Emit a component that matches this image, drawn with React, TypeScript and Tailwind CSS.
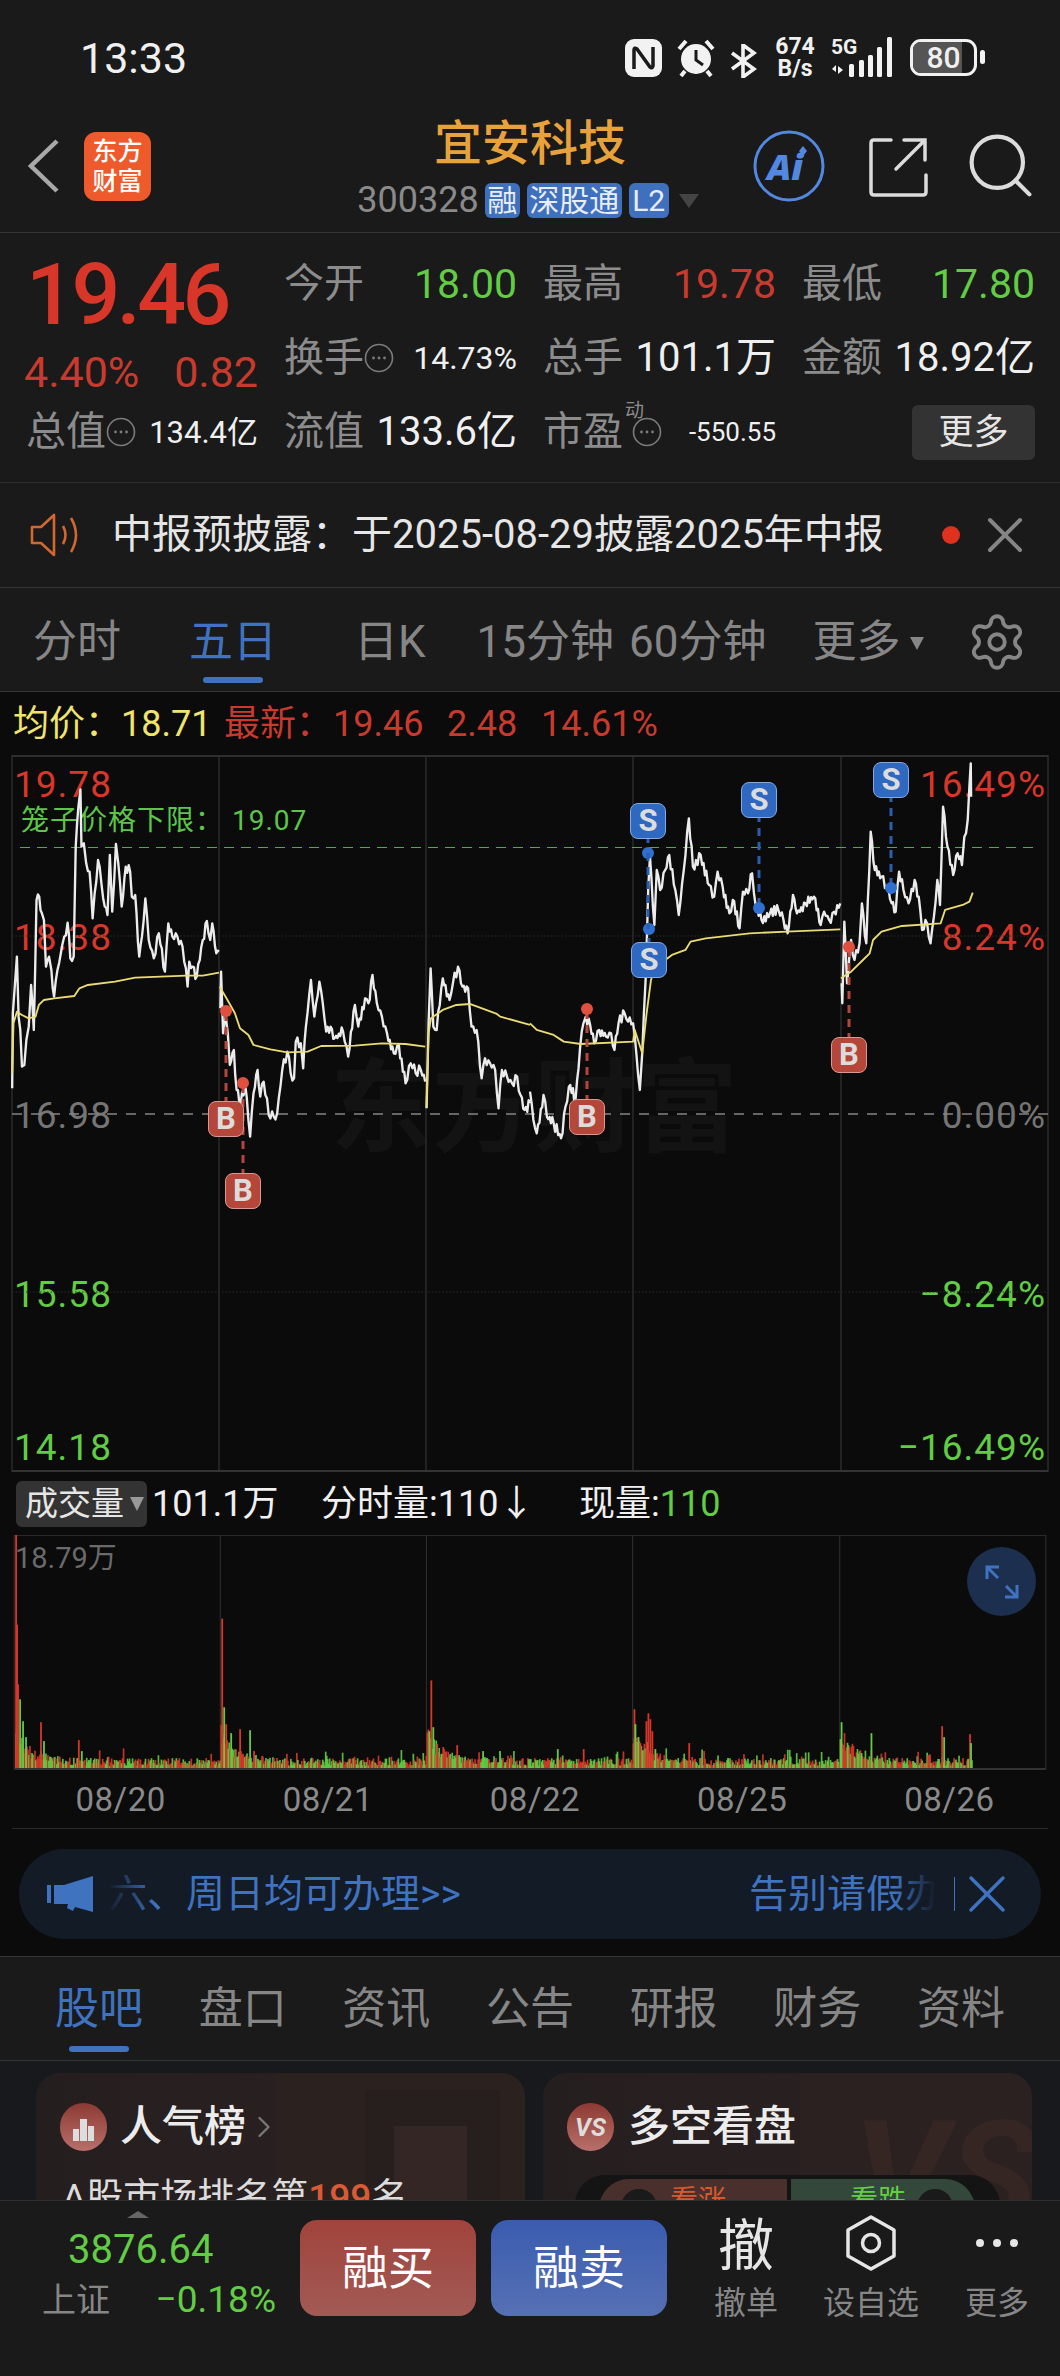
import React from "react";
import { ChevronRight, X, Search, Settings } from "lucide-react";

// ---- chart data, traced in zoom coordinates (x*2.958, (y-740)*3) ----
const priceDaysA: number[][] = [
  [36,1045,38,820,44,735,50,650,55,830,60,870,65,980,72,975,78,900,85,860,92,735,100,870,108,480,116,470,124,520,130,540,136,680,145,650,152,690,160,770,170,690,180,640,190,590,200,548,208,655,218,650,224,320,232,200,238,148,241,320,248,310,255,370,265,395,274,535,280,460,290,360,300,430,310,500,318,525,325,345,332,515,343,312,350,370,360,500,372,380,385,395,390,470,400,465,412,650,420,590,430,475,440,600,455,655,470,580,488,695,498,550,510,590,525,590,540,620,555,740,560,665,570,680,582,710,600,600,612,543,622,600,628,550,640,640,648,635],
  [652,805,654,695,660,880,668,830,674,880,680,975,692,930,700,1050,712,1090,725,1030,740,1190,750,1060,762,990,770,1070,780,1025,795,1125,810,1130,820,1120,835,990,850,935,860,1000,870,1015,875,905,890,910,897,985,905,860,920,720,930,830,945,725,955,790,965,875,978,860,990,895,1015,875,1030,950,1050,795,1060,860,1080,775,1090,790,1102,705,1115,790,1130,830,1145,880,1165,940,1180,915,1200,1030,1215,970,1230,1000,1245,990,1258,1025],
  [1262,1105,1268,850,1274,685,1282,860,1292,870,1310,715,1330,780,1340,730,1355,680,1368,740,1385,745,1395,860,1410,870,1425,1015,1435,955,1450,970,1465,990,1475,1105,1485,990,1500,1010,1515,1030,1530,1010,1540,1065,1552,1110,1568,1090],
];
const priceDaysB: number[][] = [
  [0,1055,10,1140,20,1180,40,1065,50,1130,70,1150,92,1195,105,1100,115,1040,135,1075,148,925,158,850,165,830,178,855,190,910,205,870,225,890,240,880,250,930,262,850,280,820,290,845,305,850,315,945,325,1050,332,940,342,720,350,440,355,350,368,555,375,390,385,450,400,390,412,345,430,450,440,525,455,390,470,235,482,380,505,345,530,435,545,470,555,395,570,440,590,520,600,480,620,565,630,455,645,460,657,400,668,500,685,540,710,520,735,510,750,540,762,580,778,465,790,520,815,490,840,470,860,555,870,515,885,540,900,515,918,490],
  [922,730,924,790,930,545,938,730,950,600,960,660,975,610,982,490,995,610,1008,275,1020,390,1040,410,1055,440,1070,490,1082,515,1092,395,1105,450,1120,490,1138,420,1150,470,1160,570,1170,540,1185,610,1195,530,1205,420,1213,495,1222,200,1235,320,1252,405,1265,340,1278,375,1285,290,1295,240,1300,140,1304,70,1305,170],
];
const avgDaysA: number[][] = [
  [36,1000,40,850,50,815,65,825,85,835,105,830,115,795,130,780,160,775,220,768,235,745,260,735,340,725,400,713,550,707,600,707,648,698],
  [650,740,670,775,695,820,710,865,735,885,750,915,800,928,850,937,910,935,950,918,1050,917,1130,910,1200,912,1258,920],
  [1262,1100,1268,880,1275,835,1310,810,1350,795,1390,792,1470,822,1480,830,1568,855],
];
const avgDaysB: number[][] = [
  [0,850,20,870,70,885,100,905,150,912,305,905,310,870,332,940,345,820,358,720,370,680,400,660,420,645,460,630,475,605,520,595,650,580,760,575,918,568],
  [920,715,950,695,985,660,1005,640,1015,600,1040,575,1100,558,1215,550,1228,510,1280,495,1300,485,1310,458],
];

const rng = (seed: number) => {
  let s = seed;
  return () => {
    s = (s * 1664525 + 1013904223) % 4294967296;
    return s / 4294967296;
  };
};

// zig-zags between traced points so the line looks like tick data
const noisy = (pts: number[], seed: number) => {
  const r = rng(seed);
  const out: string[] = [];
  let sign = 1;
  for (let i = 0; i < pts.length - 2; i += 2) {
    out.push(`${pts[i]},${pts[i + 1]}`);
    const dx = pts[i + 2] - pts[i];
    const n = Math.floor(dx / 4);
    for (let k = 1; k < n; k++) {
      const t = k / n;
      sign = -sign;
      const y = pts[i + 1] + (pts[i + 3] - pts[i + 1]) * t + sign * (3 + r() * 14);
      out.push(`${pts[i] + dx * t},${y}`);
    }
  }
  out.push(`${pts[pts.length - 2]},${pts[pts.length - 1]}`);
  return out.join(" ");
};
const plain = (pts: number[]) => {
  const out: string[] = [];
  for (let i = 0; i < pts.length; i += 2) out.push(`${pts[i]},${pts[i + 1]}`);
  return out.join(" ");
};

const RED = "#d9362a";
const GREEN = "#62cc45";

const markers = [
  { t: "B", x: 226, y: 1119, dy: 1011 },
  { t: "B", x: 243, y: 1191, dy: 1083 },
  { t: "B", x: 587, y: 1117, dy: 1009 },
  { t: "B", x: 849, y: 1055, dy: 947 },
  { t: "S", x: 648, y: 821, dy: 853 },
  { t: "S", x: 649, y: 960, dy: 929 },
  { t: "S", x: 759, y: 800, dy: 908 },
  { t: "S", x: 891, y: 780, dy: 888 },
];

const PriceChart = () => (
  <svg viewBox="0 755 1060 717" className="absolute inset-0 w-full h-full">
    {[12, 219, 426, 633, 841, 1048].map((x) => (
      <line key={x} x1={x} x2={x} y1={755} y2={1472} stroke="#2b2b2b" strokeWidth="1.5" />
    ))}
    <line x1="12" x2="1048" y1="756" y2="756" stroke="#2e2e2e" strokeWidth="2" />
    <line x1="12" x2="1048" y1="1471" y2="1471" stroke="#333" strokeWidth="2" />
    <line x1="12" x2="1048" y1="936" y2="936" stroke="#2a2a2a" strokeDasharray="1.5 2" />
    <line x1="12" x2="1048" y1="1292" y2="1292" stroke="#2a2a2a" strokeDasharray="1.5 2" />
    <line x1="20" x2="1040" y1="847.5" y2="847.5" stroke="#4fae3c" strokeWidth="1.2" strokeDasharray="10 7" />
    <line x1="12" x2="1048" y1="1114" y2="1114" stroke="#858585" strokeWidth="1.6" strokeDasharray="10 9" />
    <g transform="translate(0 740) scale(0.338 0.3333)" fill="none" strokeLinejoin="round">
      {priceDaysA.map((d, i) => (
        <polyline key={i} points={noisy(d, 7 + i)} stroke="#ececec" strokeWidth="7" />
      ))}
      {avgDaysA.map((d, i) => (
        <polyline key={i} points={plain(d)} stroke="#e9dc72" strokeWidth="5.5" />
      ))}
    </g>
    <g transform="translate(530 740) scale(0.338 0.3333)" fill="none" strokeLinejoin="round">
      {priceDaysB.map((d, i) => (
        <polyline key={i} points={noisy(d, 31 + i)} stroke="#ececec" strokeWidth="7" />
      ))}
      {avgDaysB.map((d, i) => (
        <polyline key={i} points={plain(d)} stroke="#e9dc72" strokeWidth="5.5" />
      ))}
    </g>
    {markers.map((m) => (
      <g key={`${m.x}-${m.y}`}>
        <line
          x1={m.x}
          x2={m.x}
          y1={m.y}
          y2={m.dy}
          stroke={m.t === "B" ? "#b5463a" : "#2a5fae"}
          strokeWidth="3"
          strokeDasharray="8 6"
        />
        <circle cx={m.x} cy={m.dy} r="6" fill={m.t === "B" ? "#e0503f" : "#2f6fd0"} />
      </g>
    ))}
    <line x1="648" x2="648" y1="853" y2="929" stroke="#2a5fae" strokeWidth="3" strokeDasharray="8 6" />
  </svg>
);

// volume bars, deterministic noise plus the spikes read off the reference
const spikes: [number, number, string][] = [
  [13, 235, RED], [14, 145, RED], [15, 85, RED], [17, 70, GREEN], [20, 48, GREEN], [23, 32, GREEN], [38, 47, RED], [41, 28, GREEN], [76, 29, RED], [79, 18, GREEN],
  [220, 151, RED], [222, 62, GREEN], [224, 45, RED], [229, 36, GREEN], [238, 40, RED], [248, 39, GREEN], [252, 18, RED],
  [430, 89, RED], [428, 38, GREEN], [432, 42, GREEN], [436, 25, RED], [442, 22, RED], [456, 24, RED], [482, 18, GREEN], [499, 18, GREEN], [557, 20, GREEN], [583, 20, RED],
  [634, 60, RED], [635, 45, GREEN], [638, 32, GREEN], [640, 26, RED], [646, 48, RED], [648, 56, RED], [650, 50, RED], [652, 38, RED], [655, 20, GREEN], [689, 26, RED], [728, 11, GREEN],
  [841, 30, GREEN], [842, 47, GREEN], [844, 24, RED], [846, 14, RED], [862, 16, GREEN], [872, 36, GREEN], [943, 43, RED], [945, 32, GREEN], [971, 35, RED], [972, 26, GREEN], [930, 10, RED],
];
const volumeBars = () => {
  const r = rng(2025);
  const bars: { x: number; h: number; c: string }[] = [];
  const days = [12, 219, 426, 633, 841];
  for (let x = 13; x < 974; x++) {
    const start = days.reduce((a, d) => (x >= d ? d : a), 12);
    const since = x - start;
    const h = 3 + r() * 8 + 36 * Math.exp(-since / 16) * (0.4 + r() * 0.6) + (r() > 0.88 ? r() * 10 : 0);
    bars.push({ x, h, c: r() > 0.48 ? GREEN : RED });
  }
  return bars;
};

const VolumeChart = () => (
  <svg viewBox="0 1535 1060 236" className="absolute inset-0 w-full h-full">
    {[12, 219, 426, 633, 841, 1048].map((x) => (
      <line key={x} x1={x} x2={x} y1={1535} y2={1770} stroke="#2b2b2b" strokeWidth="1.2" />
    ))}
    <line x1="12" x2="1048" y1="1535.5" y2="1535.5" stroke="#2a2a2a" />
    {volumeBars().map((b) => (
      <rect key={b.x} x={b.x} y={1770 - b.h} width="1.7" height={b.h} fill={b.c} opacity="0.9" />
    ))}
    {spikes.map(([x, h, c], i) => (
      <rect key={i} x={x} y={1770 - h} width="1.8" height={h} fill={c} />
    ))}
    <line x1="12" x2="1048" y1="1770" y2="1770" stroke="#333" strokeWidth="2" />
  </svg>
);

const InfoDots = () => (
  <svg width="30" height="30" viewBox="0 0 30 30" className="shrink-0">
    <circle cx="15" cy="15" r="13.5" fill="none" stroke="#7c7c7c" strokeWidth="1.6" />
    <circle cx="9.5" cy="15" r="1.4" fill="#7c7c7c" />
    <circle cx="15" cy="15" r="1.4" fill="#7c7c7c" />
    <circle cx="20.5" cy="15" r="1.4" fill="#7c7c7c" />
  </svg>
);

const StatusBar = () => (
  <div className="h-[100px] flex items-start pt-[33px] pl-[80px] text-[#f0f0f0]">
    <span className="text-[43px] leading-[50px] w-[545px]">13:33</span>
    <svg width="37" height="38" viewBox="0 0 37 38" className="mt-[6px]">
      <rect width="37" height="38" rx="9" fill="#f2f2f2" />
      <path d="M9 30V11q0-3 3-1l13 18q2 2 3-1V8" fill="none" stroke="#1a1a1a" strokeWidth="3.5" />
    </svg>
    <svg width="38" height="40" viewBox="0 0 38 40" className="ml-[15px] mt-[5px]">
      <circle cx="19" cy="21" r="15" fill="#f2f2f2" />
      <path d="M19 12v10l7 5" fill="none" stroke="#1a1a1a" strokeWidth="3" />
      <path d="M2 11 9 3M36 11l-7-8M8 33l-4 5M30 33l4 5" stroke="#f2f2f2" strokeWidth="4" />
    </svg>
    <svg width="27" height="34" viewBox="0 0 27 34" fill="none" stroke="#f2f2f2" strokeWidth="3.6" className="ml-[15px] mt-[11px]">
      <path d="M2 9 24 25 13 33V1L24 9 2 25" />
    </svg>
    <div className="ml-[14px] mt-[3px] w-[48px] flex flex-col items-center text-[23px] leading-[22px] font-bold">
      <span>674</span>
      <span>B/s</span>
    </div>
    <div className="ml-[12px] relative w-[64px] h-[44px] mt-[3px]">
      <span className="absolute left-0 top-0 text-[21px] leading-[22px] font-bold">5G</span>
      <svg width="64" height="44" viewBox="0 0 64 44" className="absolute inset-0">
        <path d="M5 36v-7l-4 4zM7 30l5 4-5 4z" fill="#f2f2f2" />
        <rect x="18" y="28" width="5" height="13" rx="1.5" fill="#f2f2f2" />
        <rect x="28" y="24" width="5" height="17" rx="1.5" fill="#f2f2f2" />
        <rect x="37" y="19" width="5" height="22" rx="1.5" fill="#f2f2f2" />
        <rect x="46" y="11" width="5" height="30" rx="1.5" fill="#f2f2f2" />
        <rect x="56" y="1" width="5" height="40" rx="1.5" fill="#f2f2f2" />
      </svg>
    </div>
    <div className="ml-[15px] mt-[6px] relative w-[67px] h-[37px] rounded-[11px] border-[3px] border-[#f2f2f2] overflow-hidden flex items-center justify-center">
      <div className="absolute left-0 top-0 bottom-0 w-[80%] bg-[#555]" />
      <span className="relative text-[30px] leading-none font-medium">80</span>
    </div>
    <div className="ml-[3px] mt-[17px] w-[5px] h-[14px] rounded-full bg-[#f2f2f2]" />
  </div>
);

const Tag = ({ children, w }: { children: React.ReactNode; w: string }) => (
  <span className={`${w} h-[35px] rounded-[6px] bg-[#3f70bd] text-[#e8edf5] text-[30px] leading-[35px] text-center`}>
    {children}
  </span>
);

const Header = () => (
  <div className="h-[133px] flex border-b border-[#333]">
    <div className="w-[330px] flex items-start pt-[32px] pl-[28px]">
      <svg width="31" height="54" viewBox="0 0 31 54" fill="none" stroke="#a8a8a8" strokeWidth="4.5" className="mt-[7px]">
        <path d="M29 2 3 27l26 25" />
      </svg>
      <div className="ml-[25px] w-[67px] h-[69px] rounded-[12px] bg-[#ee5a2b] text-white text-[25px] leading-[30px] font-medium flex flex-col items-center justify-center">
        <span>东方</span>
        <span>财富</span>
      </div>
    </div>
    <div className="w-[400px] flex flex-col items-center pt-[15px]">
      <span className="text-[48px] leading-[58px] text-[#e8a23c] font-medium">宜安科技</span>
      <div className="mt-[10px] flex items-center -ml-[4px]">
        <span className="text-[36px] leading-[35px] text-[#8a8a8a] mr-[6px]">300328</span>
        <Tag w="w-[35px]">融</Tag>
        <span className="w-[7px]" />
        <Tag w="w-[95px]">深股通</Tag>
        <span className="w-[7px]" />
        <Tag w="w-[40px]">L2</Tag>
        <span className="ml-[10px] w-0 h-0 border-x-[10px] border-x-transparent border-t-[14px] border-t-[#444]" />
      </div>
    </div>
    <div className="flex-1 flex items-start pt-[29px] pl-[22px]">
      <svg width="74" height="74" viewBox="0 0 74 74">
        <circle cx="37" cy="37" r="34" fill="none" stroke="#5288e0" strokeWidth="3" />
        <text x="15" y="51" fontSize="36" fontWeight="800" fontStyle="italic" fontFamily="'Open Sans', sans-serif" fill="#5288e0">Ai</text>
        <path d="M51 17l4 5-4 5-4-5z" fill="#5288e0" />
      </svg>
      <svg width="60" height="60" viewBox="0 0 60 60" fill="none" stroke="#dcdcdc" strokeWidth="3.5" strokeLinecap="round" className="ml-[42px] mt-[8px]">
        <path d="M23 3H6q-3 0-3 3v49q0 3 3 3h49q3 0 3-3V38" />
        <path d="M28 32 57 3M36 3h21v20" />
      </svg>
      <Search size={77} strokeWidth={1.3} className="ml-[34px] -mt-[2px] text-[#dcdcdc]" />
    </div>
  </div>
);

const Stat = ({ label, value, valueClass, info }: { label: string; value: string; valueClass: string; info?: boolean }) => (
  <div className="flex items-center justify-between">
    <div className="flex items-center">
      <span className="text-[40px] leading-none text-[#8c8c8c] whitespace-nowrap">{label}</span>
      {info && <InfoDots />}
    </div>
    <span className={`${valueClass} leading-none whitespace-nowrap`}>{value}</span>
  </div>
);

const Quote = () => (
  <div className="h-[250px] border-b border-[#2e2e2e] pt-[14px] pl-[26px] grid grid-cols-[232px_233px_233px_233px] grid-rows-[74px_74px_74px] gap-x-[26px]">
    <div className="row-span-2 flex flex-col">
      <span className="text-[86px] leading-[88px] mt-[4px] font-medium tracking-[-3.5px] text-[#d9362a]">19.46</span>
      <div className="mt-[11px] flex justify-between text-[43px] leading-[44px] text-[#c93a2e] -ml-[2px]">
        <span>4.40%</span>
        <span>0.82</span>
      </div>
    </div>
    <Stat label="今开" value="18.00" valueClass="text-[41px] text-[#62cc45]" />
    <Stat label="最高" value="19.78" valueClass="text-[41px] text-[#c93a2e]" />
    <Stat label="最低" value="17.80" valueClass="text-[41px] text-[#62cc45]" />
    <Stat label="换手" value="14.73%" valueClass="text-[32px] text-[#f0f0f0]" info />
    <Stat label="总手" value="101.1万" valueClass="text-[40px] text-[#f0f0f0]" />
    <Stat label="金额" value="18.92亿" valueClass="text-[40px] text-[#f0f0f0]" />
    <Stat label="总值" value="134.4亿" valueClass="text-[31px] text-[#f0f0f0]" info />
    <Stat label="流值" value="133.6亿" valueClass="text-[40px] text-[#f0f0f0]" />
    <div className="flex items-center justify-between relative">
      <div className="flex items-center">
        <span className="text-[40px] leading-none text-[#8c8c8c]">市盈</span>
        <span className="w-[9px]" />
        <InfoDots />
      </div>
      <span className="absolute left-[82px] top-[6px] text-[19px] leading-none text-[#8c8c8c]">动</span>
      <span className="text-[26px] leading-none text-[#f0f0f0]">-550.55</span>
    </div>
    <div className="flex items-center justify-end">
      <span className="w-[123px] h-[55px] rounded-[6px] bg-[#333] text-[#e6e6e6] text-[35px] leading-[55px] text-center">更多</span>
    </div>
  </div>
);

const Notice = () => (
  <div className="h-[105px] border-b border-[#333] flex items-center pl-[30px]">
    <svg width="50" height="44" viewBox="0 0 50 44" fill="none" stroke="#d2672f" strokeWidth="2.6" strokeLinejoin="round">
      <path d="M2 14h9L24 2v40L11 30H2z" />
      <path d="M33 13q5 9 0 18M41 5q10 17 0 34" />
    </svg>
    <span className="ml-[32px] w-[830px] text-[40px] leading-none text-[#e6e6e6] whitespace-nowrap">中报预披露：于2025-08-29披露2025年中报</span>
    <span className="w-[18px] h-[18px] rounded-full bg-[#e0301e]" />
    <X size={60} strokeWidth={1.6} className="ml-[15px] text-[#858585]" />
  </div>
);

const Tabs = () => (
  <div className="h-[104px] border-b border-[#333] flex items-start pt-[23px] text-[44px] leading-[62px] text-[#868686]">
    <span className="ml-[33px]">分时</span>
    <div className="ml-[68px] flex flex-col items-center">
      <span className="text-[#3f72bf]">五日</span>
      <span className="mt-[4px] w-[60px] h-[6px] rounded-full bg-[#3f72bf]" />
    </div>
    <span className="ml-[77px]">日K</span>
    <span className="ml-[51px]">15分钟</span>
    <span className="ml-[15px]">60分钟</span>
    <span className="ml-[46px]">更多</span>
    <span className="ml-[9px] mt-[26px] w-0 h-0 border-x-[7px] border-x-transparent border-t-[13px] border-t-[#868686]" />
    <Settings size={62} strokeWidth={1.5} className="ml-[42px] text-[#868686]" />
  </div>
);

const PriceRow = () => (
  <div className="h-[63px] flex items-center pl-[13px] text-[36px] leading-none whitespace-nowrap text-[#c93a2e]">
    <span className="text-[#f0e46e] w-[108px]">均价：</span>
    <span className="text-[#f0e46e] w-[103px]">18.71</span>
    <span className="w-[109px]">最新：</span>
    <span className="w-[114px]">19.46</span>
    <span className="w-[94px]">2.48</span>
    <span>14.61%</span>
  </div>
);

const AxisText = ({ cls, children }: { cls: string; children: React.ReactNode }) => (
  <span className={`absolute text-[37px] leading-none tracking-[1px] ${cls}`}>{children}</span>
);

const PriceSection = () => (
  <div className="relative h-[717px]">
    <div className="absolute left-[330px] top-[292px] flex text-[102px] leading-[124px] font-bold text-[#131313]">东方财富</div>
    <AxisText cls="left-[14px] top-[11px] text-[#d9362a]">19.78</AxisText>
    <AxisText cls="left-[14px] top-[164px] text-[#d9362a]">18.38</AxisText>
    <AxisText cls="left-[14px] top-[342px] text-[#757575]">16.98</AxisText>
    <AxisText cls="left-[14px] top-[521px] text-[#62cc45]">15.58</AxisText>
    <AxisText cls="left-[14px] top-[674px] text-[#62cc45]">14.18</AxisText>
    <AxisText cls="right-[14px] top-[11px] text-[#d9362a]">16.49%</AxisText>
    <AxisText cls="right-[14px] top-[164px] text-[#d9362a]">8.24%</AxisText>
    <AxisText cls="right-[14px] top-[342px] text-[#757575]">0.00%</AxisText>
    <AxisText cls="right-[14px] top-[521px] text-[#62cc45]">−8.24%</AxisText>
    <AxisText cls="right-[14px] top-[674px] text-[#62cc45]">−16.49%</AxisText>
    <span className="absolute left-[21px] top-[52px] text-[28px] leading-none tracking-[1px] text-[#5cc64a]">笼子价格下限： 19.07</span>
    <PriceChart />
    {markers.map((m) => (
      <span
        key={`${m.x}-${m.y}`}
        className={`absolute w-[36px] h-[36px] rounded-[8px] border text-center text-[31px] leading-[33px] font-bold text-[#dcdcdc] ${
          m.t === "B" ? "bg-[#b5463a] border-[#d89a90]" : "bg-[#2f68c0] border-[#86a8dc]"
        }`}
        style={{ left: m.x - 18, top: m.y - 755 - 18 }}
      >
        {m.t}
      </span>
    ))}
  </div>
);

const VolumeRow = () => (
  <div className="h-[63px] flex items-center pl-[16px] text-[36px] leading-none whitespace-nowrap text-[#f0f0f0]">
    <div className="w-[131px] h-[46px] rounded-[6px] bg-[#333] flex items-center pl-[9px]">
      <span className="text-[#e6e6e6] text-[33px]">成交量</span>
      <span className="ml-[6px] w-0 h-0 border-x-[7px] border-x-transparent border-t-[14px] border-t-[#999]" />
    </div>
    <span className="ml-[5px] w-[169px]">101.1万</span>
    <span className="w-[258px]">分时量:110↓</span>
    <span>现量:</span>
    <span className="text-[#62cc45]">110</span>
  </div>
);

const VolumeSection = () => (
  <div className="relative h-[235px]">
    <VolumeChart />
    <span className="absolute left-[15px] top-[8px] text-[29px] leading-[30px] text-[#6a6a6a]">18.79万</span>
    <div className="absolute left-[967px] top-[12px] w-[69px] h-[69px] rounded-full bg-[#1c2f4e] flex items-center justify-center">
      <svg width="36" height="36" viewBox="0 0 36 36" fill="none" stroke="#3f72bf" strokeWidth="3">
        <path d="M3 15V3h12M3 3l11 11M33 21v12H21M33 33 22 22" />
      </svg>
    </div>
  </div>
);

const Dates = () => (
  <div className="h-[59px] border-b border-[#2a2a2a] mx-[12px]">
    <div className="ml-[5px] w-[1036px] grid grid-cols-5 text-[33px] leading-[60px] text-[#8a8a8a] text-center">
      {["08/20", "08/21", "08/22", "08/25", "08/26"].map((d) => (
        <span key={d} className="tracking-[0.5px]">{d}</span>
      ))}
    </div>
  </div>
);

const Banner = () => (
  <div className="h-[127px] pt-[20px] px-[19px]">
    <div className="h-[90px] rounded-full bg-[#131b27] flex items-center pl-[28px] text-[#3f72bf] text-[39px] leading-none whitespace-nowrap">
      <svg width="46" height="36" viewBox="0 0 46 36" fill="#3f72bf">
        <rect x="0" y="9" width="4" height="18" />
        <path d="M7 9h10L46 0v36L28 31l-2 4-6-3 1-4H7z" />
      </svg>
      <div className="relative ml-[15px] w-[370px] overflow-hidden">
        <span>六、周日均可办理&gt;&gt;</span>
        <div className="absolute left-0 top-0 bottom-0 w-[48px] bg-gradient-to-r from-[#131b27] to-transparent" />
      </div>
      <div className="relative ml-[271px] w-[186px] overflow-hidden">
        <span>告别请假办</span>
        <div className="absolute right-0 top-0 bottom-0 w-[40px] bg-gradient-to-l from-[#131b27] to-transparent" />
      </div>
      <span className="ml-[19px] w-px h-[34px] bg-[#3f72bf]" />
      <X size={64} strokeWidth={1.3} />
    </div>
  </div>
);

const BottomTabs = () => (
  <div className="h-[105px] border-y border-[#333] bg-[#1a1a1a] flex px-[55px] justify-between pt-[22px] text-[44px] leading-[60px] text-[#868686]">
    <div className="flex flex-col items-center">
      <span className="text-[#3f72bf]">股吧</span>
      <span className="mt-[7px] w-[60px] h-[6px] rounded-full bg-[#3f72bf]" />
    </div>
    {["盘口", "资讯", "公告", "研报", "财务", "资料"].map((t) => (
      <span key={t}>{t}</span>
    ))}
  </div>
);

const Cards = () => (
  <div className="h-[139px] overflow-hidden bg-[#17191c] pt-[12px] px-[36px] grid grid-cols-[489px_489px] gap-x-[18px]">
    <div className="relative h-[200px] rounded-[24px] bg-gradient-to-r from-[#251e1f] to-[#2c2222] overflow-hidden">
      <div className="absolute left-[240px] top-[0px] w-[249px] h-[200px] bg-[#2b2220]" />
      <div className="absolute left-[329px] top-[17px] w-[135px] h-[200px] bg-[#271f1e]" />
      <div className="absolute left-[358px] top-[53px] w-[73px] h-[200px] bg-[#342624]" />
      <div className="relative pl-[24px] pt-[30px] flex items-center">
        <div className="w-[47px] h-[48px] rounded-full bg-gradient-to-b from-[#8c3a33] to-[#b8706a] flex items-end justify-center gap-px pb-[10px]">
          <span className="w-[6px] h-[12px] bg-[#ddd]" />
          <span className="w-[7px] h-[22px] bg-[#ddd]" />
          <span className="w-[6px] h-[15px] bg-[#ddd]" />
        </div>
        <span className="ml-[13px] text-[42px] leading-none text-[#ececec] font-medium">人气榜</span>
        <ChevronRight size={36} strokeWidth={1.6} className="text-[#777]" />
      </div>
      <div className="relative pl-[26px] mt-[28px] text-[37px] leading-none text-[#dcdcdc] whitespace-nowrap">
        A股市场排名第<span className="text-[#d95a34] font-medium">199</span>名
      </div>
    </div>
    <div className="relative h-[200px] rounded-[24px] bg-gradient-to-r from-[#251e1f] to-[#2c2222] overflow-hidden">
      <div className="absolute left-[257px] top-0 w-[232px] h-[200px] bg-[#2a2120]" />
      <span className="absolute left-[310px] top-[18px] text-[150px] leading-[170px] italic font-bold text-[#352523]">VS</span>
      <div className="relative pl-[24px] pt-[30px] flex items-center">
        <div className="w-[47px] h-[48px] rounded-full bg-gradient-to-b from-[#8c3a33] to-[#b8706a] flex items-center justify-center text-[25px] leading-none italic font-bold text-[#ddd]">VS</div>
        <span className="ml-[14px] text-[42px] leading-none text-[#ececec] font-medium">多空看盘</span>
      </div>
      <div className="absolute left-[32px] top-[102px] w-[425px] h-[100px] rounded-[30px] bg-[#141414] flex pt-[4px] px-[24px] gap-[4px] text-[28px] leading-none text-center">
        <span className="relative w-[188px] h-[70px] rounded-l-[30px] bg-[#4a302c] text-[#d9592f] pt-[8px] pl-[10px]">
          看涨
          <span className="absolute left-[22px] top-[10px] w-[36px] h-[36px] rounded-full bg-[#1a1a1a]" />
        </span>
        <span className="relative w-[184px] h-[70px] rounded-r-[30px] bg-[#33483a] text-[#62cc45] pt-[8px] pr-[10px]">
          看跌
          <span className="absolute right-[22px] top-[10px] w-[36px] h-[36px] rounded-full bg-[#1a1a1a]" />
        </span>
      </div>
    </div>
  </div>
);

const BottomBar = () => (
  <div className="h-[176px] bg-[#1a1a1a] border-t border-[#2e2e2e] flex items-start relative">
    <span className="absolute left-[127px] top-[10px] w-0 h-0 border-x-[11px] border-x-transparent border-b-[7px] border-b-[#666]" />
    <div className="w-[300px] pt-[26px] pl-[42px] flex flex-col">
      <span className="ml-[26px] text-[40px] leading-[46px] text-[#62cc45]">3876.64</span>
      <div className="mt-[5px] w-[234px] flex justify-between items-center">
        <span className="text-[34px] leading-[44px] text-[#868686]">上证</span>
        <span className="text-[37px] leading-[44px] text-[#62cc45]">−0.18%</span>
      </div>
    </div>
    <div className="mt-[19px] w-[176px] h-[96px] rounded-[17px] bg-gradient-to-b from-[#a0433c] to-[#a25a55] text-white text-[46px] leading-[96px] text-center">融买</div>
    <div className="mt-[19px] ml-[15px] w-[176px] h-[96px] rounded-[17px] bg-gradient-to-b from-[#3a5caf] to-[#5670b4] text-white text-[46px] leading-[96px] text-center">融卖</div>
    <div className="ml-[37px] w-[84px] flex flex-col items-center pt-[18px]">
      <span className="text-[56px] leading-[54px] text-[#e6e6e6]">撤</span>
      <span className="mt-[11px] text-[32px] leading-[38px] text-[#868686]">撤单</span>
    </div>
    <div className="ml-[33px] w-[100px] flex flex-col items-center pt-[14px]">
      <svg width="54" height="56" viewBox="0 0 54 56" fill="none" stroke="#e6e6e6" strokeWidth="3.5" strokeLinejoin="round">
        <path d="M27 2 50 15v26L27 54 4 41V15z" />
        <circle cx="27" cy="28" r="8.5" />
      </svg>
      <span className="mt-[13px] text-[32px] leading-[38px] text-[#868686]">设自选</span>
    </div>
    <div className="ml-[44px] w-[64px] flex flex-col items-center pt-[14px]">
      <div className="h-[56px] flex items-center gap-[9px]">
        <span className="w-[8px] h-[8px] rounded-full bg-[#e6e6e6]" />
        <span className="w-[8px] h-[8px] rounded-full bg-[#e6e6e6]" />
        <span className="w-[8px] h-[8px] rounded-full bg-[#e6e6e6]" />
      </div>
      <span className="mt-[13px] text-[32px] leading-[38px] text-[#868686]">更多</span>
    </div>
  </div>
);

export default function App(): React.JSX.Element {
  return (
    <div className="w-[1060px] h-[2376px] overflow-hidden bg-[#1a1a1a] font-['Roboto','Noto_Sans_CJK_SC',sans-serif]">
      <StatusBar />
      <Header />
      <Quote />
      <Notice />
      <Tabs />
      <div className="bg-[#0b0b0b]">
        <PriceRow />
        <PriceSection />
        <VolumeRow />
        <VolumeSection />
        <Dates />
        <Banner />
      </div>
      <BottomTabs />
      <Cards />
      <BottomBar />
    </div>
  );
}
